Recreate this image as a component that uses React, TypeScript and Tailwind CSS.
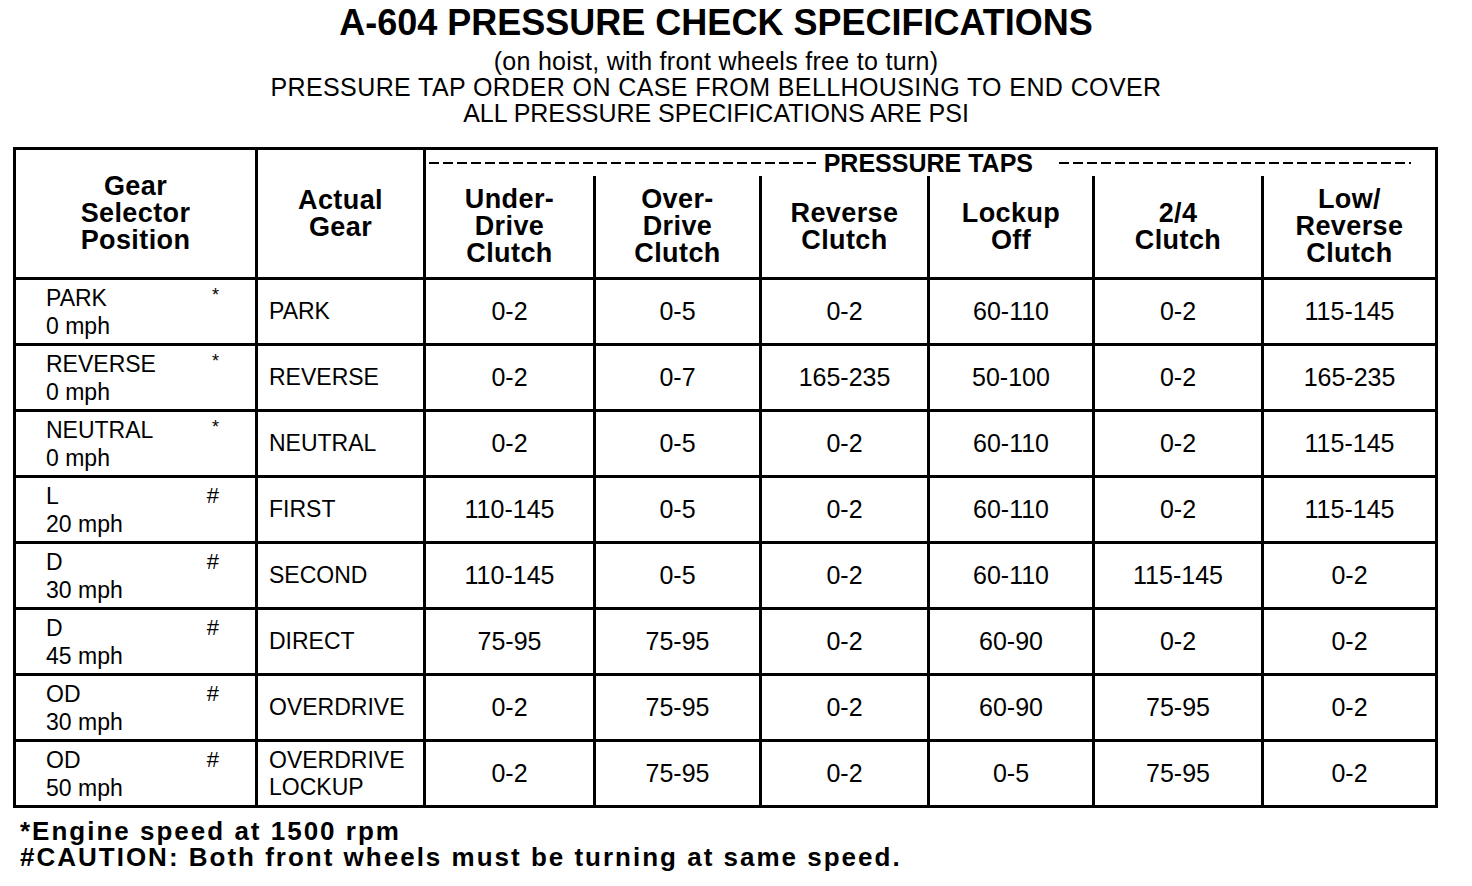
import React from 'react';

// Row data: selector position, speed, footnote mark, actual gear, tap pressures
interface SpecRow {
  pos: string;
  speed: string;
  mark: string;
  gear: string[];
  taps: string[];
}

const rows: SpecRow[] = [
  { pos: 'PARK', speed: '0 mph', mark: '*', gear: ['PARK'], taps: ['0-2', '0-5', '0-2', '60-110', '0-2', '115-145'] },
  { pos: 'REVERSE', speed: '0 mph', mark: '*', gear: ['REVERSE'], taps: ['0-2', '0-7', '165-235', '50-100', '0-2', '165-235'] },
  { pos: 'NEUTRAL', speed: '0 mph', mark: '*', gear: ['NEUTRAL'], taps: ['0-2', '0-5', '0-2', '60-110', '0-2', '115-145'] },
  { pos: 'L', speed: '20 mph', mark: '#', gear: ['FIRST'], taps: ['110-145', '0-5', '0-2', '60-110', '0-2', '115-145'] },
  { pos: 'D', speed: '30 mph', mark: '#', gear: ['SECOND'], taps: ['110-145', '0-5', '0-2', '60-110', '115-145', '0-2'] },
  { pos: 'D', speed: '45 mph', mark: '#', gear: ['DIRECT'], taps: ['75-95', '75-95', '0-2', '60-90', '0-2', '0-2'] },
  { pos: 'OD', speed: '30 mph', mark: '#', gear: ['OVERDRIVE'], taps: ['0-2', '75-95', '0-2', '60-90', '75-95', '0-2'] },
  { pos: 'OD', speed: '50 mph', mark: '#', gear: ['OVERDRIVE', 'LOCKUP'], taps: ['0-2', '75-95', '0-2', '0-5', '75-95', '0-2'] },
];

const tapHeaders: string[][] = [
  ['Under-', 'Drive', 'Clutch'],
  ['Over-', 'Drive', 'Clutch'],
  ['Reverse', 'Clutch'],
  ['Lockup', 'Off'],
  ['2/4', 'Clutch'],
  ['Low/', 'Reverse', 'Clutch'],
];

const COLS = 'grid grid-cols-[239px_168px_170px_166px_168px_165px_169px_174px]';

function HeadLines({ lines }: { lines: string[] }) {
  return (
    <div className="flex flex-col items-center text-[27px] font-bold leading-[27px] tracking-[0.4px]">
      {lines.map((l, i) => (
        <span key={i}>{l}</span>
      ))}
    </div>
  );
}

function Dashes({ className }: { className: string }) {
  return <div className={`h-[2px] bg-[repeating-linear-gradient(90deg,#000_0_10px,transparent_10px_14px)] ${className}`} />;
}

export default function App() {
  return (
    <div className="min-h-screen w-[1472px] bg-white text-black font-['Liberation_Sans',Arial,sans-serif]">
      {/* Titles */}
      <header className="flex flex-col items-center pt-[4px] pr-[40px]">
        <h1 className="text-[36px] font-bold leading-[38px]">A-604 PRESSURE CHECK SPECIFICATIONS</h1>
        <p className="mt-[6px] text-[25px] leading-[26px] tracking-[0.3px]">(on hoist, with front wheels free to turn)</p>
        <p className="text-[25px] leading-[26px] tracking-[0.4px]">PRESSURE TAP ORDER ON CASE FROM BELLHOUSING TO END COVER</p>
        <p className="text-[25px] leading-[26px]">ALL PRESSURE SPECIFICATIONS ARE PSI</p>
      </header>

      {/* Table */}
      <div className="ml-[13px] mt-[21px] w-[1425px] border-[3px] border-black">
        <div className={`${COLS} grid-rows-[26px_101px]`}>
          <div className="row-span-2 flex items-center justify-center">
            <HeadLines lines={['Gear', 'Selector', 'Position']} />
          </div>
          <div className="row-span-2 flex items-center justify-center border-l-[3px] border-black">
            <HeadLines lines={['Actual', 'Gear']} />
          </div>
          <div className="col-span-6 flex items-center border-l-[3px] border-black pl-[3px] pr-[24px]">
            <Dashes className="flex-1" />
            <span className="ml-[8px] mr-[26px] text-[25px] font-bold leading-none">PRESSURE TAPS</span>
            <Dashes className="w-[352px]" />
          </div>
          {tapHeaders.map((h, i) => (
            <div key={i} className="flex items-center justify-center border-l-[3px] border-black">
              <HeadLines lines={h} />
            </div>
          ))}
        </div>

        {rows.map((r, i) => (
          <div key={i} className={`${COLS} h-[66px] border-t-[3px] border-black`}>
            <div className="flex flex-col justify-center pl-[30px] pr-[36px] text-[23px] leading-[28px]">
              <div className="flex justify-between">
                <span>{r.pos}</span>
                <span className={r.mark === '*' ? 'text-[18px] leading-[22px]' : 'text-[22px]'}>{r.mark}</span>
              </div>
              <span>{r.speed}</span>
            </div>
            <div className="flex flex-col justify-center border-l-[3px] border-black pl-[11px] text-[23px] leading-[27px]">
              {r.gear.map((g, j) => (
                <span key={j}>{g}</span>
              ))}
            </div>
            {r.taps.map((t, j) => (
              <div key={j} className="flex items-center justify-center border-l-[3px] border-black text-[25px]">
                {t}
              </div>
            ))}
          </div>
        ))}
      </div>

      {/* Footnotes */}
      <div className="mt-[10px] pl-[20px] text-[26px] font-bold leading-[26px] tracking-[2px]">
        <p>*Engine speed at 1500 rpm</p>
        <p>#CAUTION: Both front wheels must be turning at same speed.</p>
      </div>
    </div>
  );
}
